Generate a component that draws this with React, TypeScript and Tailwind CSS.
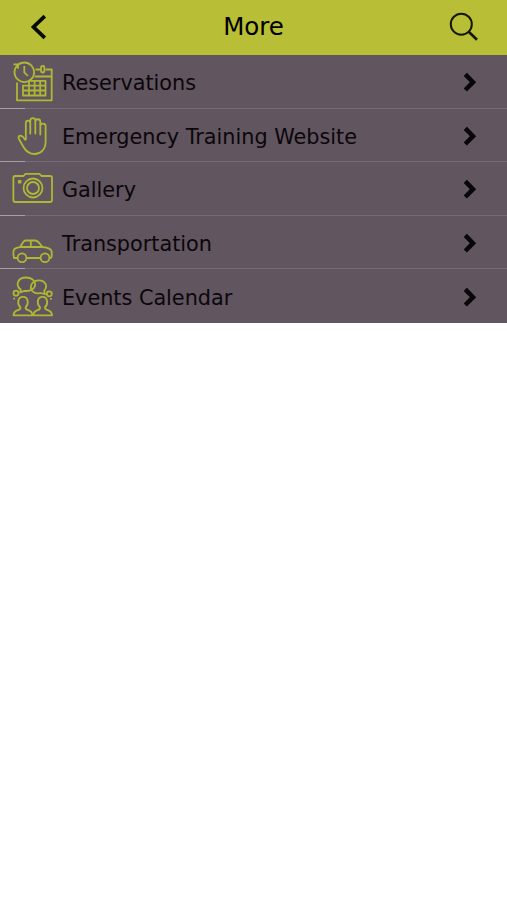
import type { ReactNode } from 'react';

const icons: Record<string, ReactNode> = {
  reservations: (
    <>
      <path d="M17 27.5V45.3H51.7V14.5H45.5M40.5 14.5H35.5M34.5 21.5H51.7" />
      <circle cx="24.3" cy="17.3" r="9.8" />
      <path d="M13.5 9.3H18V13.8M24.3 11V17.3L27.8 21" />
      <rect x="41" y="11" width="3.4" height="6.5" rx="1.7" />
      <path d="M29 25.8H45.5V40.5H23V30.6H45.5M23 35.5H45.5M29 25.8V40.5M34.6 25.8V40.5M40.2 25.8V40.5" />
    </>
  ),
  emergency: (
    <path d="M25.8 31V14.2C25.8 10.8 30.3 10.8 30.3 14.2V24.5V11.6C30.3 8.2 35.3 8.2 35.3 11.6V24.5V12.8C35.3 9.4 40.3 9.4 40.3 12.8V25.5V17C40.3 13.8 45.6 13.8 45.6 17V33C45.6 40.5 40.5 45 34.5 45C29 45 26 42.3 23.5 38L18.8 29.7C17.5 26.8 21 25.7 23 28L25.8 31.5" />
  ),
  gallery: (
    <>
      <path d="M15.3 14H23.5L25.5 11.8H39.5L41.5 14H50C51.3 14 52 14.7 52 16V38C52 39.3 51.3 40 50 40H15.3C14 40 13.4 39.3 13.4 38V16C13.4 14.7 14 14 15.3 14Z" />
      <circle cx="33" cy="26" r="9.5" />
      <circle cx="33" cy="26" r="6" />
      <rect x="18.8" y="18.8" width="1.8" height="1.8" />
    </>
  ),
  transportation: (
    <>
      <path d="M17.5 42H14C13.2 38 12.8 34.5 14.5 33C16 31.8 18.5 31.5 20 31L23.5 25.7C24 24.9 24.7 24.5 25.7 24.5H35C38.5 24.5 40 28.5 42.5 31C47 31.5 51.7 32.5 51.7 36V40.2C51.7 41.5 51 42 49.7 42M26.5 42H40.5M20 31H42.5M30.8 24.5V31" />
      <circle cx="22" cy="41.8" r="4.4" />
      <circle cx="45" cy="41.8" r="4.4" />
    </>
  ),
  events: (
    <>
      <path d="M20.8 20.6C15 16.5 17.5 8.5 26 8.5C31.5 8.5 35.2 11.5 35.2 15.3C35.2 19.5 30.5 22.8 24.3 21.8L20.2 23.5Z" />
      <path d="M44.2 21.8C48.5 17 45 11.4 38.8 11.4C34.2 11.4 30.8 14.4 30.8 18C30.8 22.5 35.5 25.4 40.5 24L45 25.2Z" />
      <circle cx="16" cy="24.2" r="2.5" />
      <circle cx="49.3" cy="24.8" r="2.5" />
      <path d="M14.2 28.7V30.5M51 29V30.8" />
      <path d="M13.5 46.3C13.5 39.5 21.2 42.5 20.4 38.3C17 35.5 17.3 27.8 23 27.8C28.7 27.8 28.8 35.5 25.6 38.3C25 42.5 32.3 39.5 32.5 46.3Z" />
      <path d="M33.5 46.3C33.5 39.5 40.8 42.5 40 38.3C36.7 35.5 36.8 27.8 42.5 27.8C48.2 27.8 48.2 35.5 45 38.3C44.5 42.5 52 39.5 52 46.3Z" />
    </>
  ),
};

const rows = [
  { id: 'reservations', label: 'Reservations' },
  { id: 'emergency', label: 'Emergency Training Website' },
  { id: 'gallery', label: 'Gallery' },
  { id: 'transportation', label: 'Transportation' },
  { id: 'events', label: 'Events Calendar' },
];

export default function App() {
  return (
    <div className="min-h-screen w-full bg-white font-[Verdana,'DejaVu_Sans',sans-serif] text-black">
      <header className="grid h-[55px] grid-cols-[1fr_auto_1fr] items-center bg-[#b8be35]">
        <button aria-label="Back" className="mb-px ml-[30px] justify-self-start">
          <svg width="18" height="28" viewBox="0 0 18 28" fill="none" stroke="#070903" strokeWidth="3.7">
            <path d="M14.8 3.2L3.5 14L14.8 24.8" />
          </svg>
        </button>
        <h1 className="pb-px text-[24.5px] leading-[54px] tracking-[-0.1px]">More</h1>
        <button aria-label="Search" className="mr-[28px] mb-px justify-self-end">
          <svg width="30" height="30" viewBox="0 0 30 30" fill="none" stroke="#151705" strokeWidth="2">
            <circle cx="12.3" cy="12.2" r="10.5" />
            <path d="M19.7 19.8L28 27.8" strokeWidth="2.6" />
          </svg>
        </button>
      </header>
      <nav className="bg-[#61555f]">
        {rows.map((row, index) => (
          <a key={row.id} className="flex h-[53.6px] flex-col">
            <span className="flex min-h-0 flex-1 items-center">
              <svg width="62" height="53" viewBox="0 0 62 53" className="shrink-0 self-start" fill="none" stroke="#b0b735" strokeWidth="1.8" strokeLinejoin="round">
                {icons[row.id]}
              </svg>
              <span className="flex-1 pt-[4px] text-[20.8px] leading-6 whitespace-nowrap tracking-[-0.02px] text-[#0b070b]">{row.label}</span>
              <svg width="16" height="20" viewBox="0 0 16 20" className="mr-[29px] mt-[2px] shrink-0" fill="none" stroke="#080609" strokeWidth="4.5">
                <path d="M3.3 2.4L11 10.2L3.3 18" />
              </svg>
            </span>
            {index < rows.length - 1 && (
              <span className="flex h-px shrink-0">
                <span className="w-[25px] bg-[#a69ea5]" />
                <span className="flex-1 bg-[#766b74]" />
              </span>
            )}
          </a>
        ))}
      </nav>
    </div>
  );
}
